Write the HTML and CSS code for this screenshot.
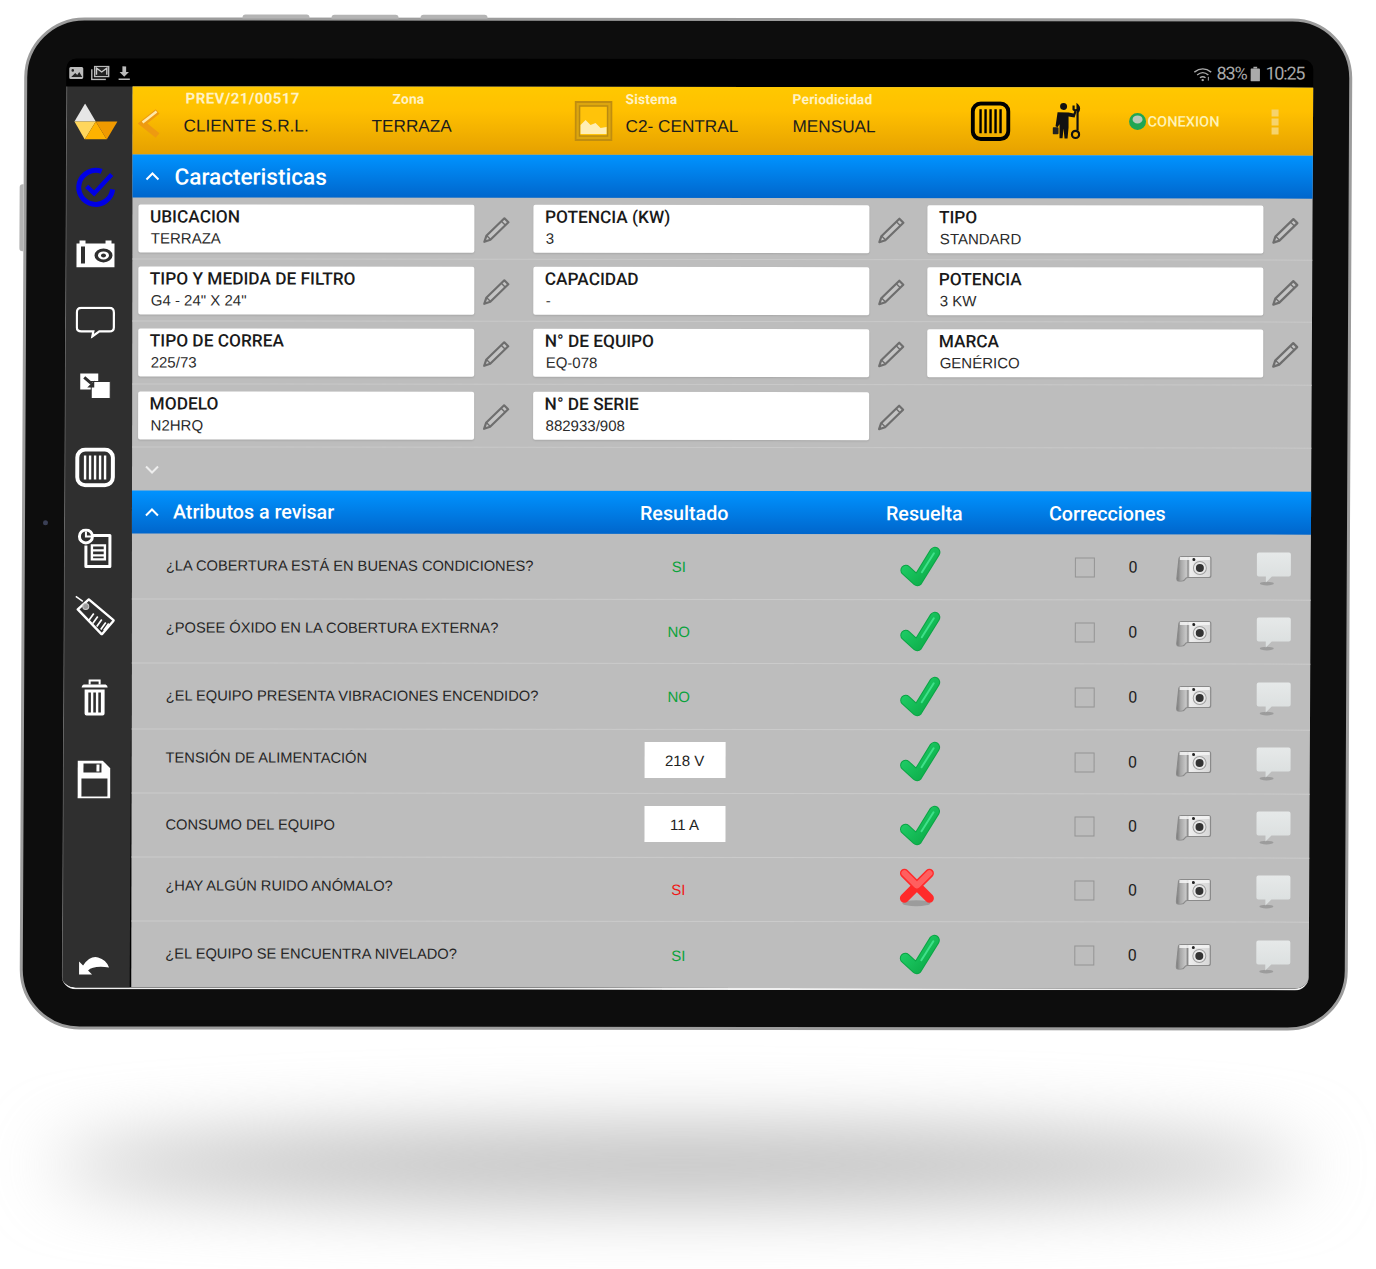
FILE: index.html
```html
<!DOCTYPE html>
<html lang="es">
<head>
<meta charset="utf-8">
<title>Revisión de equipo</title>
<link rel="stylesheet" href="styles.css">
</head>
<body>
<svg class="defs" aria-hidden="true">
  <defs>
    <linearGradient id="tickFill" x1="0" y1="0" x2="1" y2="1">
      <stop offset="0" stop-color="#22d36c"/><stop offset="1" stop-color="#0aa845"/>
    </linearGradient>
    <linearGradient id="silver" x1="0" y1="0" x2="1" y2="0">
      <stop offset="0" stop-color="#777"/><stop offset=".12" stop-color="#a8a8a8"/><stop offset=".28" stop-color="#c8c8c8"/><stop offset=".33" stop-color="#888"/><stop offset=".38" stop-color="#eee"/><stop offset="1" stop-color="#d6d6d6"/>
    </linearGradient>
    <linearGradient id="bubbleFill" x1="0" y1="0" x2="0" y2="1">
      <stop offset="0" stop-color="#e6e9e9"/><stop offset="1" stop-color="#dadede"/>
    </linearGradient>
    <symbol id="pencil" viewBox="0 0 28 28">
      <path d="M22 2.500l4 4L8 24l-6 2 2-6z" fill="#c4c4c4" stroke="#6e6e6e" stroke-width="2.200" stroke-linejoin="round"/>
      <path d="M4.500 20l3.500 3.500M19 5.500l4 4" stroke="#6e6e6e" stroke-width="1.400" fill="none"/>
    </symbol>
    <symbol id="tick" viewBox="0 0 44 44">
      <path d="M7 25l11.500 10.500L36 7" fill="none" stroke="#0aa645" stroke-width="11" stroke-linecap="round" stroke-linejoin="round"/>
      <path d="M7 25l11.500 10.500L36 7" fill="none" stroke="url(#tickFill)" stroke-width="9" stroke-linecap="round" stroke-linejoin="round"/>
      <path d="M23 27L35 8" fill="none" stroke="#3fe08a" stroke-width="2" stroke-linecap="round"/>
    </symbol>
    <symbol id="cross" viewBox="0 0 40 44">
      <ellipse cx="19" cy="37" rx="14" ry="3" fill="#8f8f8f" opacity=".7"/>
      <path d="M7 7l25 25M32 7L7 32" fill="none" stroke="#ff2a2a" stroke-width="9" stroke-linecap="round"/>
      <path d="M7 7l12 12M32 7L20 19" fill="none" stroke="#ff5f5f" stroke-width="6" stroke-linecap="round"/>
    </symbol>
    <symbol id="photo" viewBox="0 0 38 28">
      <path d="M3 6q0-3 3-3h27q2 0 2 2v17q0 2-2 2H12q-2 0-3 2-1 2-5 2-3 0-3-3z" fill="url(#silver)" stroke="#8a8a8a" stroke-width="1.200"/>
      <rect x="4" y="3.500" width="30" height="3" fill="#f4f4f4" opacity=".85"/>
      <circle cx="18" cy="6" r="1.500" fill="#222"/>
      <circle cx="24" cy="14.500" r="6.500" fill="#e8e8e8" stroke="#a0a0a0"/>
      <circle cx="24" cy="14.500" r="4" fill="#333"/>
    </symbol>
    <symbol id="bubble" viewBox="0 0 36 36">
      <ellipse cx="11" cy="32" rx="7" ry="1.800" fill="#8f8f8f" opacity=".7"/>
      <path d="M3 1h30q2 0 2 2v20q0 2-2 2H16l-6 6v-6H3q-2 0-2-2V3q0-2 2-2z" fill="url(#bubbleFill)"/>
    </symbol>
    <symbol id="chev-up" viewBox="0 0 16 10"><path d="M2 8l6-6 6 6" fill="none" stroke="#fff" stroke-width="2"/></symbol>
    <symbol id="bars" viewBox="0 0 40 40">
      <rect x="2.200" y="2.200" width="35.600" height="35.600" rx="8" fill="none" stroke="currentColor" stroke-width="4"/>
      <path d="M10 8v24M15 8v24M20 8v24M25 8v24M30 8v24" stroke="currentColor" stroke-width="2.400"/>
    </symbol>
  </defs>
</svg>

<div class="tablet">
  <span class="key key-a"></span><span class="key key-b"></span><span class="key key-c"></span><span class="key key-side"></span>
  <span class="lens"></span>
  <div class="screen">
    <div class="status">
      <div class="status-icons">
        <svg class="st-icon" viewBox="0 0 16 14"><rect x="1" y="1" width="14" height="12" rx="1.500" fill="#bbb"/><path d="M3 11l4-4 2 2 2-3 3 5z" fill="#222"/><circle cx="4.500" cy="4.500" r="1.300" fill="#222"/></svg>
        <svg class="st-icon st-wide" viewBox="0 0 20 16"><rect x="4" y="1" width="15" height="11" fill="#222" stroke="#bbb" stroke-width="1.500"/><path d="M1 4v11h15" fill="none" stroke="#bbb" stroke-width="1.500"/><path d="M6 10V3l5.500 4L17 3v7" fill="none" stroke="#ccc" stroke-width="1.500"/></svg>
        <svg class="st-icon" viewBox="0 0 14 16"><path d="M5 1h4v6h3l-5 5-5-5h3zM1 14h12v1.500H1z" fill="#bbb"/></svg>
      </div>
      <div class="status-right">
        <svg class="st-wifi" viewBox="0 0 20 16"><path d="M1 6q9-7 18 0M4 9q6-5 12 0M7 12q3-2 6 0" fill="none" stroke="#aaa" stroke-width="1.500"/><circle cx="10" cy="14.500" r="1.300" fill="#aaa"/><path d="M16 11v4" stroke="#aaa"/></svg>
        <span class="st-text">83%</span>
        <svg class="st-batt" viewBox="0 0 10 16"><rect x="3" y="0" width="4" height="2" fill="#aaa"/><rect x="0" y="2" width="10" height="14" rx="1" fill="#aaa"/></svg>
        <span class="st-text st-time">10:25</span>
      </div>
    </div>
    <div class="workspace">
      <nav class="rail">
        <div class="rail-stack">
          <span class="rail-cell">
            <svg class="i-logo" viewBox="0 0 44 36"><path d="M11.300 0L.7 18H22z" fill="#e6e6e6"/><path d="M.7 18H22L11 36z" fill="#ffd65c"/><path d="M22 18L11 36h22z" fill="#ffb300"/><path d="M22 18h21.700L33 36z" fill="#f09a00"/></svg>
          </span>
          <span class="rail-cell">
            <svg class="i-44" viewBox="0 0 44 44"><path d="M28 6A17 17 0 1 0 39 24" fill="none" stroke="#0000e6" stroke-width="5"/><path d="M13 21l7.500 7L38 9" fill="none" stroke="#0000e6" stroke-width="4.500"/></svg>
          </span>
          <span class="rail-cell">
            <svg class="i-cam" viewBox="0 0 40 28"><path d="M1 4h3V1h6v3h20V1h6v3h3v24H1z" fill="#fff"/><rect x="5.500" y="7" width="4" height="17" fill="#2f2f2f"/><ellipse cx="28" cy="16" rx="9" ry="7" fill="#2f2f2f"/><ellipse cx="28" cy="16" rx="5.500" ry="4" fill="#fff"/><ellipse cx="28" cy="16" rx="2.500" ry="2" fill="#2f2f2f"/></svg>
          </span>
          <span class="rail-cell">
            <svg class="i-chat" viewBox="0 0 40 32"><path d="M6 1.500h28q4.500 0 4.500 4.500v15q0 4-4.500 4H24l-7 5 1-5H6q-4.500 0-4.500-4V6Q1.500 1.500 6 1.500z" fill="none" stroke="#fff" stroke-width="2.200"/></svg>
          </span>
          <span class="rail-cell">
            <svg class="i-swap" viewBox="0 0 32 27"><path d="M1 1h18v8h-1v8H1z" fill="#fff"/><rect x="12" y="9" width="19" height="17" fill="#fff" stroke="#2f2f2f" stroke-width="1"/><path d="M5 5l7 6" stroke="#2f2f2f" stroke-width="3"/><path d="M15 8v7H8z" fill="#2f2f2f"/></svg>
          </span>
          <span class="rail-cell rail-gap rail-bars"><svg class="i-40"><use href="#bars"/></svg></span>
          <span class="rail-cell rail-gap">
            <svg class="i-clip" viewBox="0 0 36 40"><path d="M9 7h24v31H9V17" fill="none" stroke="#fff" stroke-width="3" stroke-linejoin="round"/><circle cx="9" cy="8" r="6.500" fill="#2f2f2f" stroke="#fff" stroke-width="3"/><path d="M9 3v5h6" stroke="#fff" stroke-width="2" fill="none"/><path d="M15 17h13v14H15zM15 22h13M15 27h13" fill="none" stroke="#fff" stroke-width="2.400"/></svg>
          </span>
          <span class="rail-cell">
            <svg class="i-tag" viewBox="0 0 40 40"><path d="M1 1l7 5" stroke="#fff" stroke-width="1.500"/><path d="M3 14L14 4l25 21-12 14z" fill="none" stroke="#fff" stroke-width="2.400" stroke-linejoin="round"/><circle cx="11" cy="11" r="3" fill="#999" stroke="#ccc"/><path d="M19 18l-5 7M23 21l-5 7M27 24l-5 7M31 27l-5 7M34 28l-5 7" stroke="#fff" stroke-width="1.700"/></svg>
          </span>
          <span class="rail-cell rail-gap">
            <svg class="i-trash" viewBox="0 0 28 38"><path d="M1 9q0-2 2-3h22q2 1 2 3z" fill="#fff"/><path d="M9 6V2h10v4" fill="none" stroke="#fff" stroke-width="2"/><path d="M4 11h20v24q0 2-2 2H6q-2 0-2-2z" fill="#fff"/><path d="M9 14v20M14 14v20M19 14v20" stroke="#2f2f2f" stroke-width="2.600"/></svg>
          </span>
          <span class="rail-cell rail-gap">
            <svg class="i-disk" viewBox="0 0 33 38"><path d="M0 0h25l8 8v30H0z" fill="#fff"/><rect x="6" y="3" width="18" height="9" fill="#2f2f2f"/><rect x="19" y="4" width="3" height="7" fill="#fff"/><rect x="4" y="18" width="26" height="18" fill="#2f2f2f"/></svg>
          </span>
          <span class="rail-back">
            <svg class="i-back" viewBox="0 0 32 20"><path d="M1 6v13h13l-4-4q5-5 21-3Q28 4 20 2 12 0 5 10z" fill="#fff"/></svg>
          </span>
        </div>
      </nav>

      <main class="panel">
        <header class="topbar">
          <svg class="i-prev" viewBox="0 0 24 30"><path d="M20 3L5 15l15 12" fill="none" stroke="#ee9a10" stroke-width="6"/><path d="M19 3L5 14" stroke="#ffe9a8" stroke-width="2.500"/></svg>
          <div class="top-field"><span class="top-label top-label-wide">PREV/21/00517</span><span class="top-value">CLIENTE S.R.L.</span></div>
          <div class="top-field"><span class="top-label top-label-zona">Zona</span><span class="top-value">TERRAZA</span></div>
          <svg class="i-image" viewBox="0 0 38 40"><rect x="1" y="1" width="36" height="38" fill="#dca60e" stroke="#c08d10" stroke-width="2"/><rect x="5" y="5" width="28" height="30" fill="#ffc30a" stroke="#b98a12" stroke-width="1.500"/><path d="M6 33V24l5-5 5 5 5-2 5 5 6-1v7z" fill="#ffeeb5"/></svg>
          <div class="top-field"><span class="top-label">Sistema</span><span class="top-value">C2- CENTRAL</span></div>
          <div class="top-field"><span class="top-label">Periodicidad</span><span class="top-value">MENSUAL</span></div>
          <svg class="i-40 top-bars"><use href="#bars"/></svg>
          <svg class="i-worker" viewBox="0 0 28 38"><circle cx="11" cy="4" r="3.500" fill="#111"/><path d="M5 10h11l5 1 1-3 2 1-2 6-6-1v11l-1 11h-3l-1-10-1 10H7V22l-2 3-2-1z" fill="#111"/><rect x="0" y="25" width="6" height="7" rx="1" fill="#222"/><path d="M21 3v4q2 2 4 0V3q3 3 0 7v18" fill="none" stroke="#111" stroke-width="2.200"/><circle cx="23" cy="32" r="3.600" fill="none" stroke="#111" stroke-width="2.200"/></svg>
          <div class="conn">
            <svg class="i-globe" viewBox="0 0 18 18"><circle cx="9" cy="9" r="8.500" fill="#1fa653"/><ellipse cx="9" cy="7" rx="5" ry="4" fill="#b9c9b9"/></svg>
            <span class="conn-text">CONEXION</span>
          </div>
          <div class="kebab"><i></i><i></i><i></i></div>
        </header>

        <section class="bar">
          <svg class="chev"><use href="#chev-up"/></svg>
          <h1 class="bar-title">Caracteristicas</h1>
        </section>

        <section class="specs">
          <div class="spec-row">
            <div class="spec"><div class="card"><b>UBICACION</b><span>TERRAZA</span></div><svg class="pen"><use href="#pencil"/></svg></div>
            <div class="spec"><div class="card"><b>POTENCIA (KW)</b><span>3</span></div><svg class="pen"><use href="#pencil"/></svg></div>
            <div class="spec"><div class="card"><b>TIPO</b><span>STANDARD</span></div><svg class="pen"><use href="#pencil"/></svg></div>
          </div>
          <div class="spec-row">
            <div class="spec"><div class="card"><b>TIPO Y MEDIDA DE FILTRO</b><span>G4 - 24" X 24"</span></div><svg class="pen"><use href="#pencil"/></svg></div>
            <div class="spec"><div class="card"><b>CAPACIDAD</b><span>-</span></div><svg class="pen"><use href="#pencil"/></svg></div>
            <div class="spec"><div class="card"><b>POTENCIA</b><span>3 KW</span></div><svg class="pen"><use href="#pencil"/></svg></div>
          </div>
          <div class="spec-row spec-row-tall">
            <div class="spec"><div class="card"><b>TIPO DE CORREA</b><span>225/73</span></div><svg class="pen"><use href="#pencil"/></svg></div>
            <div class="spec"><div class="card"><b>N° DE EQUIPO</b><span>EQ-078</span></div><svg class="pen"><use href="#pencil"/></svg></div>
            <div class="spec"><div class="card"><b>MARCA</b><span>GENÉRICO</span></div><svg class="pen"><use href="#pencil"/></svg></div>
          </div>
          <div class="spec-row spec-row-tall">
            <div class="spec"><div class="card"><b>MODELO</b><span>N2HRQ</span></div><svg class="pen"><use href="#pencil"/></svg></div>
            <div class="spec"><div class="card"><b>N° DE SERIE</b><span>882933/908</span></div><svg class="pen"><use href="#pencil"/></svg></div>
          </div>
          <div class="more"><svg class="chev chev-down"><use href="#chev-up"/></svg></div>
        </section>

        <section class="bar">
          <svg class="chev"><use href="#chev-up"/></svg>
          <h2 class="bar-sub">Atributos a revisar</h2>
          <span class="head-col head-result">Resultado</span>
          <span class="head-col head-solved">Resuelta</span>
          <span class="head-col head-fix">Correcciones</span>
        </section>

        <section class="rows">
          <div class="row">
            <span class="q">¿LA COBERTURA ESTÁ EN BUENAS CONDICIONES?</span>
            <span class="res ok">SI</span>
            <svg class="mark"><use href="#tick"/></svg>
            <span class="box"></span><span class="count">0</span>
            <svg class="snap"><use href="#photo"/></svg><svg class="note"><use href="#bubble"/></svg>
          </div>
          <div class="row">
            <span class="q q-up">¿POSEE ÓXIDO EN LA COBERTURA EXTERNA?</span>
            <span class="res ok">NO</span>
            <svg class="mark"><use href="#tick"/></svg>
            <span class="box"></span><span class="count">0</span>
            <svg class="snap"><use href="#photo"/></svg><svg class="note"><use href="#bubble"/></svg>
          </div>
          <div class="row">
            <span class="q">¿EL EQUIPO PRESENTA VIBRACIONES ENCENDIDO?</span>
            <span class="res ok">NO</span>
            <svg class="mark"><use href="#tick"/></svg>
            <span class="box"></span><span class="count">0</span>
            <svg class="snap"><use href="#photo"/></svg><svg class="note"><use href="#bubble"/></svg>
          </div>
          <div class="row">
            <span class="q q-up">TENSIÓN DE ALIMENTACIÓN</span>
            <span class="res-input">218 V</span>
            <svg class="mark"><use href="#tick"/></svg>
            <span class="box"></span><span class="count">0</span>
            <svg class="snap"><use href="#photo"/></svg><svg class="note"><use href="#bubble"/></svg>
          </div>
          <div class="row">
            <span class="q">CONSUMO DEL EQUIPO</span>
            <span class="res-input">11 A</span>
            <svg class="mark"><use href="#tick"/></svg>
            <span class="box"></span><span class="count">0</span>
            <svg class="snap"><use href="#photo"/></svg><svg class="note"><use href="#bubble"/></svg>
          </div>
          <div class="row">
            <span class="q q-up">¿HAY ALGÚN RUIDO ANÓMALO?</span>
            <span class="res bad">SI</span>
            <svg class="mark mark-x"><use href="#cross"/></svg>
            <span class="box"></span><span class="count">0</span>
            <svg class="snap"><use href="#photo"/></svg><svg class="note"><use href="#bubble"/></svg>
          </div>
          <div class="row">
            <span class="q">¿EL EQUIPO SE ENCUENTRA NIVELADO?</span>
            <span class="res ok">SI</span>
            <svg class="mark"><use href="#tick"/></svg>
            <span class="box"></span><span class="count">0</span>
            <svg class="snap"><use href="#photo"/></svg><svg class="note"><use href="#bubble"/></svg>
          </div>
        </section>
      </main>
    </div>
  </div>
</div>
<div class="floor-shadow"></div>
</body>
</html>
```

FILE: styles.css
```css
* { box-sizing: border-box; }

html, body { margin: 0; height: 100%; background: #fff; overflow: hidden; }
body { font-family: "Liberation Sans", Arial, sans-serif; }

.defs { position: absolute; width: 0; height: 0; }

/* Device body: seen at a slight angle, so the whole thing leans a little */
.tablet {
  position: relative;
  width: 1328px;
  height: 1012px;
  margin: 18px 0 0 21.500px;
  padding: 38px 37px 38px 39px;
  background: #0d0d0d;
  border: 3px solid #9c9c9c;
  border-radius: 60px;
  transform: matrix(1, .001, -.005, 1, 0, 0);
}

.key { position: absolute; background: #b4b4b4; border-radius: 3px 3px 0 0; }
.key-a, .key-b, .key-c { top: -6px; width: 67px; height: 4px; }
.key-a { left: 215px; }
.key-b { left: 304px; }
.key-c { left: 393px; }
.key-side { left: -7px; top: 164px; width: 4px; height: 67px; border-radius: 3px 0 0 3px; }
.lens { position: absolute; left: 18px; top: 500px; width: 5px; height: 5px; border-radius: 50%; background: #3a3f55; }

.screen {
  display: flex;
  flex-direction: column;
  width: 1247px;
  height: 931px;
  background: #000;
  border-radius: 10px 10px 14px 14px;
  overflow: hidden;
  border-bottom: 2px solid #f0f0f0;
}

.status { flex: 0 0 28px; display: flex; justify-content: space-between; align-items: center; padding: 0 9px 0 2px; }
.status-icons { display: flex; align-items: center; gap: 6px; }
.st-icon { width: 16px; height: 15px; }
.st-wide { width: 20px; }
.status-right { display: flex; align-items: center; gap: 4px; color: #a8a8a8; }
.st-wifi { width: 19px; height: 15px; }
.st-batt { width: 10px; height: 15px; }
.st-text { font: 400 18px/1 Roboto, sans-serif; letter-spacing: -1.200px; }
.st-time { margin-left: 1px; }

.workspace { flex: 1; display: flex; min-height: 0; }

/* Side rail */
.rail { flex: 0 0 68px; background: #2f2f2f; border-left: 1px solid #666; }
.rail-stack {
  display: flex; flex-direction: column; align-items: center;
  height: 100%; padding: 2px 8px 12px 0;
  transform: matrix(1, 0, .003, 1, 0, 0);
}
.rail-cell { flex: 0 0 66px; display: flex; align-items: center; justify-content: center; }
.rail-gap { margin-top: 16px; }
.rail-bars { color: #fff; }
.rail-back { margin-top: auto; display: flex; }
.i-logo { width: 44px; height: 36px; }
.i-44 { width: 44px; height: 44px; }
.i-cam { width: 40px; height: 28px; }
.i-chat { width: 40px; height: 32px; margin-top: 5px; }
.i-swap { width: 32px; height: 27px; }
.i-40 { width: 40px; height: 40px; }
.i-clip { width: 36px; height: 40px; margin-bottom: 3px; }
.i-tag { width: 40px; height: 40px; }
.i-trash { width: 28px; height: 38px; }
.i-disk { width: 33px; height: 38px; }
.i-back { width: 32px; height: 20px; }

/* Content area */
.panel {
  flex: 1; min-width: 0;
  margin-right: -6px;
  display: flex; flex-direction: column;
  background: #bdbdbd;
  transform: matrix(1, 0, .0035, 1, 0, 0);
}

.topbar {
  flex: 0 0 68px;
  display: grid;
  grid-template-columns: 51px 188px 203px 51px 167px 178px 82px 76px 130px 1fr;
  align-items: center;
  background: linear-gradient(#ffc800, #ffc000 35%, #e5a000);
}
.i-prev { width: 24px; height: 30px; margin: 5px 0 0 5px; }
.top-field { display: flex; flex-direction: column; gap: 9px; padding-bottom: 14px; }
.top-label { font: 700 13.800px/15px Roboto, sans-serif; letter-spacing: .15px; color: #fff2c4; }
.top-label-wide { font-size: 15px; letter-spacing: .4px; padding-left: 2px; }
.top-label-zona { padding-left: 21px; }
.top-value { font: 400 17.200px/20px "Liberation Sans", sans-serif; color: #1c1c1c; }
.i-image { width: 38px; height: 40px; }
.top-bars { color: #000; }
.i-worker { width: 28px; height: 38px; }
.conn { display: flex; align-items: center; gap: 1px; }
.i-globe { width: 18px; height: 18px; }
.conn-text { font: 500 14.600px/1 Roboto, sans-serif; color: #fff3b5; }
.kebab { display: flex; flex-direction: column; gap: 2px; padding-left: 13px; }
.kebab i { width: 7px; height: 7px; background: #f6d36c; }

.bar { display: flex; align-items: center; color: #fff; background: linear-gradient(#0093ff, #0066cc); flex: 0 0 43px; padding-left: 12px; }
.chev { width: 16px; height: 10px; flex: none; }
.bar-title { margin: 0 0 0 14px; padding-top: 4px; font: 500 22.600px/1 Roboto, sans-serif; }
.bar-sub { margin: 0 0 0 13px; width: 467px; font: 500 19.700px/1 Roboto, sans-serif; }
.head-col { padding-top: 2px; font: 500 19.700px/1 Roboto, sans-serif; }
.head-result { width: 246px; }
.head-solved { width: 163px; }

/* Characteristic cards */
.specs { flex: 0 0 293px; display: flex; flex-direction: column; }
.spec-row {
  flex: 0 0 62px;
  display: grid;
  grid-template-columns: 395px 394px 1fr;
  padding: 7px 0 0 5.500px;
  border-bottom: 1px solid #c9c9c9;
}
.spec-row-tall { flex-basis: 63px; }
.spec { display: flex; align-items: flex-start; }
.card {
  width: 336.500px; height: 48px;
  display: flex; flex-direction: column; gap: 2px;
  padding: 2px 0 0 12px;
  background: #fff;
  border-radius: 2px;
  box-shadow: 0 1px 2px rgba(0, 0, 0, .12);
}
.card b { font: 500 17.300px/20px Roboto, sans-serif; color: #1a1a1a; }
.card span { font: 400 15px/18px "Liberation Sans", sans-serif; color: #2b2b2b; padding: 1px 0 0 1px; }
.pen { width: 28px; height: 28px; margin: 11px 0 0 8px; }
.more { flex: 1; display: flex; align-items: center; padding-left: 12px; }
.chev-down { transform: scaleY(-1); opacity: .75; }

/* Attribute rows */
.rows { flex: 1; display: grid; grid-template-rows: 66px 64px 66px 64px 64px 64px 1fr; }
.row {
  display: grid;
  grid-template-columns: 508px 90px 110px 160px 60px 50px 46px 78px 80px;
  align-items: center;
  border-bottom: 1px solid #cbcbcb;
}
.row:last-child { border-bottom: 0; }
.q { padding: 0 0 2px 34px; font-size: 14.650px; color: #262626; white-space: nowrap; }
.q-up { padding-bottom: 7px; }
.res { font: 500 15px/1 "Liberation Sans", sans-serif; text-align: center; padding-right: 12px; }
.ok { color: #0ba33c; }
.bad { color: #f01818; }
.res-input {
  justify-self: center; width: 81px; height: 36px; margin-bottom: 3px;
  display: flex; align-items: center; justify-content: center;
  background: #fff; font-size: 15px; color: #222;
}
.mark { grid-column: 4; justify-self: center; width: 44px; height: 44px; margin-left: 2px; }
.mark-x { width: 40px; height: 44px; margin: 0 5px 4px 0; }
.box { grid-column: 6; justify-self: center; width: 20px; height: 20px; border: 1.500px solid #949494; }
.count { text-align: center; font: 400 16px/1 Roboto, sans-serif; color: #222; }
.snap { justify-self: center; width: 38px; height: 28px; }
.note { justify-self: center; width: 36px; height: 36px; margin-top: 4px; }

/* Soft shadow under the device */
.floor-shadow {
  width: 1260px; height: 66px;
  margin: 102px 0 0 50px;
  background: #b4b4b4;
  border-radius: 50%;
  filter: blur(36px);
}
```
